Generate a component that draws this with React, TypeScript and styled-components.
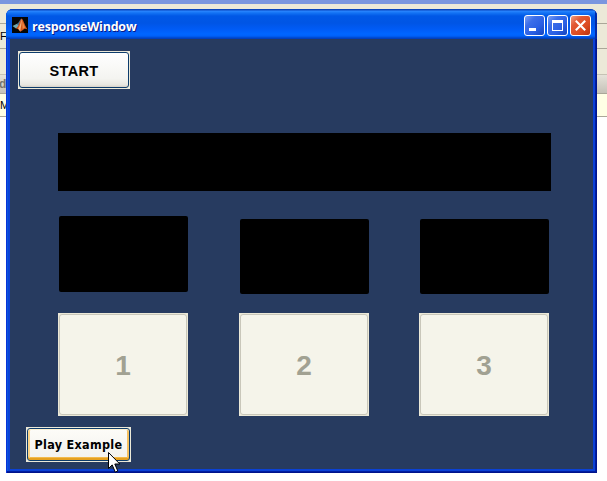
import React from 'react';
import styled, { createGlobalStyle, css } from 'styled-components';

const GlobalStyle = createGlobalStyle`
  * { box-sizing: border-box; }
  body { margin: 0; background: #fff; overflow: hidden; }
`;

const Desktop = styled.main`
  position: relative;
  width: 607px;
  height: 481px;
  overflow: hidden;
  background: #fff;
  font-family: "Liberation Sans", Arial, sans-serif;
`;

const Backdrop = styled.div`
  display: flex;
  flex-direction: column;
`;

const BackdropRow = styled.div<{ $height: number; $fill: string; $line?: string; $color?: string }>`
  height: ${p => p.$height}px;
  background: ${p => p.$fill};
  border-bottom: ${p => (p.$line ? `1px solid ${p.$line}` : '0')};
  color: ${p => p.$color ?? '#000'};
  font-size: 11px;
  letter-spacing: -1px;
  line-height: ${p => p.$height - 1}px;
`;

const HeadingLetter = styled.span`
  display: block;
  margin-left: -1px;
  font-size: 12px;
  font-weight: bold;
  line-height: 18px;
`;

const Window = styled.section`
  position: absolute;
  left: 6px;
  top: 9px;
  width: 591px;
  height: 464px;
  display: flex;
  flex-direction: column;
  padding: 0 4px 4px;
  border-radius: 7px 7px 0 0;
  overflow: hidden;
  background: #0a41d6;
  box-shadow: inset 1px 0 #0831d9, inset -1px -1px #00138c, inset -2px -2px #001ea0, inset 2px 0 #0855dd;
`;

const TitleBar = styled.header`
  flex: none;
  height: 30px;
  margin: 0 -4px;
  padding: 2px 6px 0;
  display: flex;
  align-items: center;
  background: linear-gradient(#0a45bd 0, #0a45bd 1px, #2a86ff 2px, #1272f4 4px, #0058e6 7px, #0055e5 14px, #005bf5 20px, #0066ff 25px, #0061f8 27px, #0045c8 29px, #023bb4 30px);
  box-shadow: inset -2px 0 #0029a8;
`;

const Title = styled.h1`
  flex: 1;
  margin: 3px 0 0 4px;
  color: #fff;
  font: bold 12.5px/18px "Open Sans", sans-serif;
  letter-spacing: -0.2px;
  text-shadow: 1px 1px #0a1883;
`;

const Controls = styled.div`
  display: flex;
  gap: 2px;
`;

const Control = styled.button<{ $close?: boolean }>`
  width: 21px;
  height: 21px;
  padding: 0;
  border: 1px solid #fff;
  border-radius: 3px;
  background: ${p => (p.$close
    ? 'linear-gradient(135deg, #f0a084 0%, #e25a36 30%, #dc4b21 65%, #b93210 100%)'
    : 'linear-gradient(135deg, #7ba0f4 0%, #3c6ee9 30%, #2a5fe4 65%, #1544bd 100%)')};
  svg { display: block; }
`;

const Client = styled.div`
  flex: 1;
  width: 583px;
  display: flex;
  flex-direction: column;
  align-items: flex-start;
  padding: 12px 0 0 8px;
  background: #273b60;
`;

const buttonLook = {
  normal: css`
    border-color: #0d3c6c;
    background: linear-gradient(#fff, #f4f4f0 75%, #e7e6e0 94%, #d6d0c5);
  `,
  hover: css`
    border-color: #0d3c6c;
    background: linear-gradient(#fdfcf8, #f2f1ec);
    box-shadow: inset 0 1px #fff0cf, inset 0 -2px #e5a01f, inset 2px 0 #fbd48a, inset -2px 0 #f5c162, inset 0 -3px #f2b94b;
  `,
  disabled: css`
    border-color: #c9c7ba;
    color: #a1a192;
    background: #f5f4ea;
  `,
};

const Mat = styled.div<{ $w: number; $h: number }>`
  width: ${p => p.$w}px;
  height: ${p => p.$h}px;
  padding: 1px;
  background: #ece9d8;
`;

const PushButton = styled.button<{ $look: keyof typeof buttonLook; $font: string; $spacing?: number; $drop?: number }>`
  display: flex;
  align-items: center;
  justify-content: center;
  width: 100%;
  height: 100%;
  padding: ${p => p.$drop ?? 0}px 0 0;
  border: 1px solid;
  border-radius: 3px;
  color: #000;
  font: ${p => p.$font};
  letter-spacing: ${p => p.$spacing ?? 0}px;
  white-space: nowrap;
  ${p => buttonLook[p.$look]}
`;

const Display = styled.div`
  width: 493px;
  height: 58px;
  margin: 44px 0 0 40px;
  background: #000;
`;

const Trials = styled.div`
  display: grid;
  grid-template-columns: 130px 130px 130px;
  column-gap: 50.5px;
  margin: 25px 0 0 40px;
`;

const Trial = styled.div<{ $shift: number }>`
  display: flex;
  flex-direction: column;
  height: 200px;
  justify-content: space-between;
  margin-left: ${p => p.$shift}px;
`;

const Stimulus = styled.div<{ $low?: boolean }>`
  width: 129px;
  height: ${p => (p.$low ? 75 : 76)}px;
  margin: ${p => (p.$low ? 3 : 0)}px 0 0 1px;
  border-radius: 2px;
  background: #000;
`;

const Footer = styled.footer`
  margin: 11px 0 0 8px;
`;

const Pointer = styled.svg`
  position: absolute;
  left: 107px;
  top: 451px;
`;

const MatlabIcon = () => (
  <svg width="16" height="16" viewBox="0 0 16 16" aria-hidden="true">
    <rect width="16" height="16" fill="#050607" />
    <path d="M0.5 9 5 6.8l2.5 2L4 11.5z" fill="#6fa9b4" />
    <path d="M5 6.8c2-.8 2.5-4 4.5-5.3L7.5 9z" fill="#3f6f92" />
    <path d="M4 11.5c2.5-1 3.5-8 5.7-10C11.5 3 13 9 15.5 12.5c-2.5-1.5-3.5-.5-4.5.5l-2.8 1.8c-1-2-2-3.3-4.2-3.3z" fill="#d4551d" />
    <path d="M9.6 1.8c.5 4-.6 8-1.4 12.6l-2-2.9c2.2-2.5 2.4-6.700 3.4-9.700z" fill="#f6ae78" />
    <path d="m10.300 4 2.700 6.500-2.500 1.500z" fill="#ed8a45" />
  </svg>
);

const MinimizeGlyph = () => (
  <svg width="19" height="19"><path d="M4 12h7v3H4z" fill="#fff" /></svg>
);
const MaximizeGlyph = () => (
  <svg width="19" height="19"><path fillRule="evenodd" d="M4 4h11v11H4zM5 7v7h9V7z" fill="#fff" /></svg>
);
const CloseGlyph = () => (
  <svg width="19" height="19"><path d="m4.8 4.8 9.4 9.4m0-9.4-9.4 9.4" stroke="#fff" strokeWidth="2.1" fill="none" /></svg>
);

const trials = [
  { label: '1', shift: 0, low: false },
  { label: '2', shift: 0.5, low: true },
  { label: '3', shift: 0, low: true },
];

export default function App() {
  return (
    <>
      <GlobalStyle />
      <Desktop>
        <Backdrop>
          <BackdropRow $height={4} $fill="#7a96df" />
          <BackdropRow $height={20} $fill="#ece9d8" $line="#aaa799" />
          <BackdropRow $height={25} $fill="#ece9d8" $line="#aaa799">Fe</BackdropRow>
          <BackdropRow $height={26} $fill="#ece9d8" $line="#c5c2b4" />
          <BackdropRow $height={19} $fill="linear-gradient(#e5e2d9, #c5c2b8)" $line="#aaa799" $color="#77756e">
            <HeadingLetter>d</HeadingLetter>
          </BackdropRow>
          <BackdropRow $height={23} $fill="#ffffe5" $line="#aaa799">M</BackdropRow>
        </Backdrop>
        <Window>
          <TitleBar>
            <MatlabIcon />
            <Title>responseWindow</Title>
            <Controls>
              <Control aria-label="Minimize"><MinimizeGlyph /></Control>
              <Control aria-label="Maximize"><MaximizeGlyph /></Control>
              <Control $close aria-label="Close"><CloseGlyph /></Control>
            </Controls>
          </TitleBar>
          <Client>
            <Mat $w={112} $h={38}>
              <PushButton $look="normal" $drop={1} $spacing={0.3} $font='bold 14.5px "Liberation Sans", Arial, sans-serif'>START</PushButton>
            </Mat>
            <Display />
            <Trials>
              {trials.map(t => (
                <Trial key={t.label} $shift={t.shift}>
                  <Stimulus $low={t.low} />
                  <Mat $w={130} $h={103}>
                    <PushButton disabled $look="disabled" $drop={3} $font='bold 28px "Liberation Sans", Arial, sans-serif'>
                      {t.label}
                    </PushButton>
                  </Mat>
                </Trial>
              ))}
            </Trials>
            <Footer>
              <Mat $w={105} $h={35}>
                <PushButton $look="hover" $spacing={0.3} $font='bold 12.5px "DejaVu Sans Condensed", "DejaVu Sans", sans-serif'>
                  Play Example
                </PushButton>
              </Mat>
            </Footer>
          </Client>
        </Window>
        <Pointer width="14" height="23" viewBox="0 0 14 23" aria-hidden="true">
          <path d="M1.5 1.5v16l3.7-3.6 3.1 7.2 2.5-1.1-3-7h5z" fill="#fff" stroke="#000" />
        </Pointer>
      </Desktop>
    </>
  );
}
